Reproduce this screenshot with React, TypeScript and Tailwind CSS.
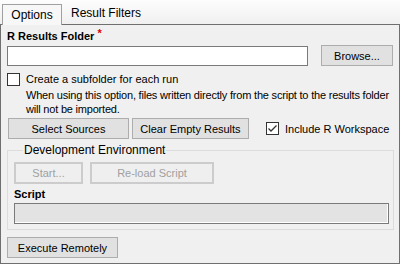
function Checkbox({checked}: {checked?: boolean}) {
    return (
        <div className="w-[13px] h-[13px] border border-[#333333] bg-white flex items-center justify-center shrink-0">
            {checked && (
                <svg width="11" height="11" viewBox="0 0 11 11">
                    <path d="M1.5 5.5 L4 8 L9.5 2.5" fill="none" stroke="#333333" strokeWidth="1.3"/>
                </svg>
            )}
        </div>
    );
}

function Button({label, w, h = "h-[21px]", disabled}: {label: string; w: string; h?: string; disabled?: boolean}) {
    return (
        <div className={`${w} ${h} shrink-0 flex items-center justify-center ${disabled ? "border-2 border-[#cccccc] bg-[#efefef] text-[#a0a0a0]" : "border border-[#adadad] bg-[#e1e1e1]"}`}>
            {label}
        </div>
    );
}

function App() {
    return (
        <div className="w-[400px] h-[264px] bg-[#f0f0f0] text-[11px] leading-[14px] text-black flex flex-col font-['Liberation_Sans',Arial,sans-serif]">
            <div className="h-[24px] shrink-0 flex items-end pl-[2px] bg-gradient-to-b from-[#fdfdfd] to-[#f0f0f0]">
                <div className="w-[60px] h-[21px] border border-b-0 border-[#a0a0a0] bg-[#f7f7f7] flex items-center justify-center relative top-[1px] pb-[1px] text-[12px]">
                    Options
                </div>
                <div className="h-[22px] flex items-center pl-[9px] text-[12px]">Result Filters</div>
            </div>
            <div className="flex-1 border border-[#6f6f6f] pl-[6px] flex flex-col">
                <div className="mt-[4px] font-bold">
                    R Results Folder <span className="text-[#e00000] text-[11px] relative -top-[3px]">*</span>
                </div>
                <div className="mt-[2px] flex items-start">
                    <div className="mt-[1px] w-[301px] h-[20px] border border-[#7a7a7a] bg-white"></div>
                    <div className="ml-[13px]">
                        <Button label="Browse..." w="w-[72px]"/>
                    </div>
                </div>
                <div className="mt-[6px] h-[14px] flex items-center">
                    <Checkbox/>
                    <span className="ml-[6px]">Create a subfolder for each run</span>
                </div>
                <div className="mt-[2px] ml-[19px] whitespace-nowrap tracking-[-0.2px]">
                    <p>When using this option, files written directly from the script to the results folder</p>
                    <p>will not be imported.</p>
                </div>
                <div className="mt-[2px] flex items-center pl-[1px]">
                    <Button label="Select Sources" w="w-[121px]"/>
                    <div className="ml-[3px]">
                        <Button label="Clear Empty Results" w="w-[117px]"/>
                    </div>
                    <div className="ml-[17px] flex items-center">
                        <Checkbox checked/>
                        <span className="ml-[6px]">Include R Workspace</span>
                    </div>
                </div>
                <fieldset className="mt-[4px] w-[387px] border border-[#dcdcdc] pl-[6px] pb-[5px]">
                    <legend className="ml-[9px] px-[1px] text-[12px]">Development Environment</legend>
                    <div className="mt-[5px] flex">
                        <Button label="Start..." w="w-[69px]" h="h-[22px]" disabled/>
                        <div className="ml-[7px]">
                            <Button label="Re-load Script" w="w-[124px]" h="h-[22px]" disabled/>
                        </div>
                    </div>
                    <div className="mt-[3px] font-bold">Script</div>
                    <div className="mt-[2px] w-[375px] h-[21px] border border-[#7a7a7a] bg-[#e3e3e3] shadow-[inset_-1px_-1px_0_#ffffff]"></div>
                </fieldset>
                <div className="mt-[7px]">
                    <Button label="Execute Remotely" w="w-[111px]"/>
                </div>
            </div>
        </div>
    );
}

export default App;
